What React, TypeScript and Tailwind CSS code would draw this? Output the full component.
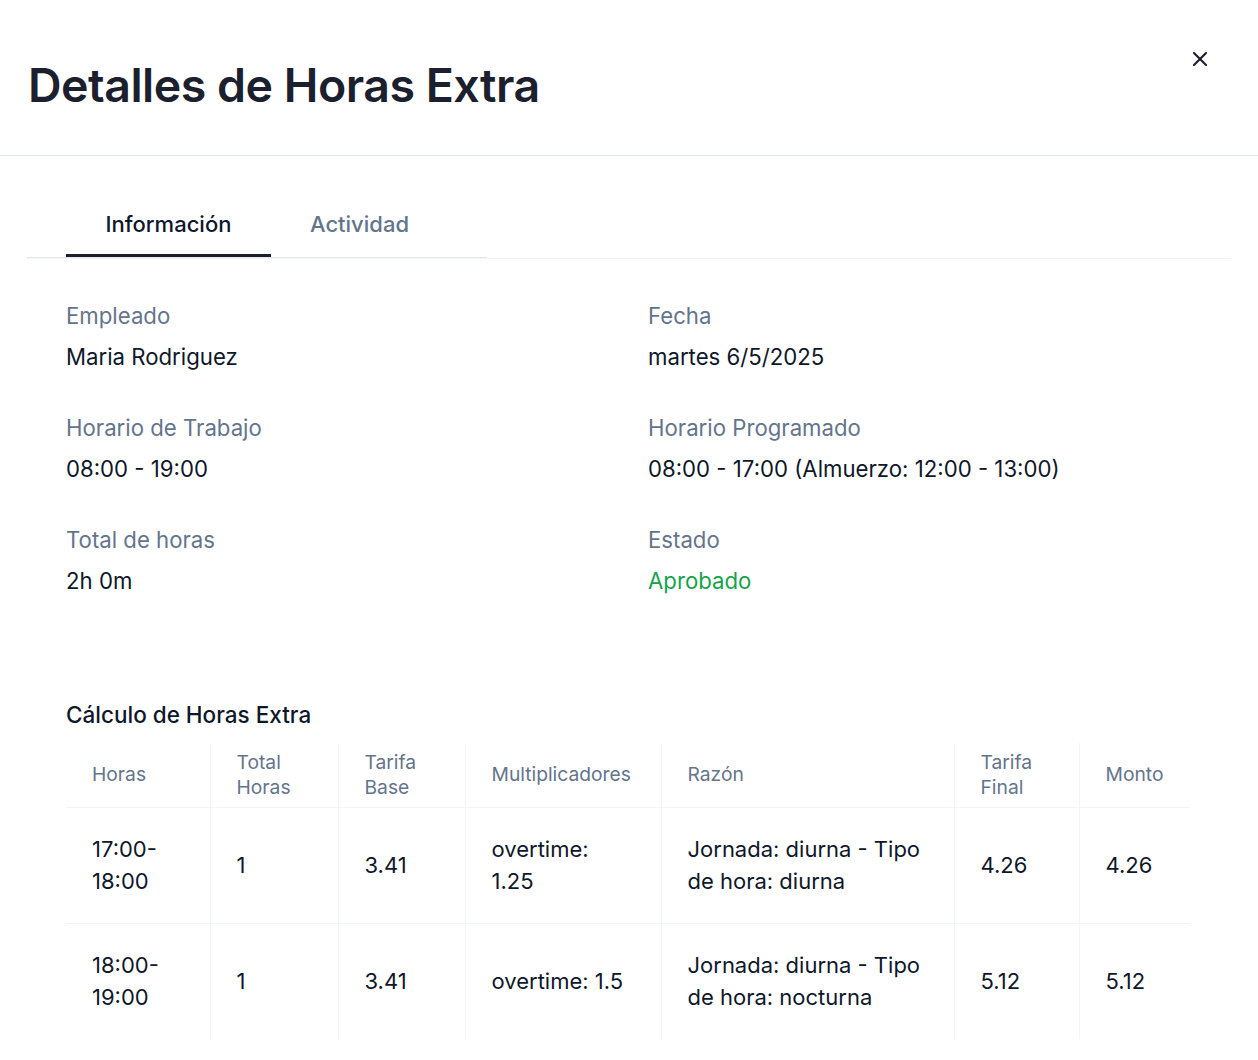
import { X } from 'lucide-react';

const fields = [
  { label: 'Empleado', value: 'Maria Rodriguez' },
  { label: 'Fecha', value: 'martes 6/5/2025' },
  { label: 'Horario de Trabajo', value: '08:00 - 19:00' },
  { label: 'Horario Programado', value: '08:00 - 17:00 (Almuerzo: 12:00 - 13:00)' },
  { label: 'Total de horas', value: '2h 0m' },
  { label: 'Estado', value: 'Aprobado', status: true },
];

const columns = [
  { title: 'Horas', width: 'w-[144px]' },
  { title: 'Total Horas', width: 'w-[128px]' },
  { title: 'Tarifa Base', width: 'w-[127px]' },
  { title: 'Multiplicadores', width: 'w-[196px]' },
  { title: 'Razón', width: 'w-[293px]' },
  { title: 'Tarifa Final', width: 'w-[125px]' },
  { title: 'Monto', width: 'w-[111px]' },
];

const rows = [
  ['17:00-18:00', '1', '3.41', 'overtime: 1.25', 'Jornada: diurna - Tipo de hora: diurna', '4.26', '4.26'],
  ['18:00-19:00', '1', '3.41', 'overtime: 1.5', 'Jornada: diurna - Tipo de hora: nocturna', '5.12', '5.12'],
];

function App() {
  return (
    <div className="min-h-screen w-full bg-white font-['Inter',sans-serif] text-[#0f172a]">
      <div className="flex h-[156px] items-start justify-between border-b border-[#e2e8f0] pl-[28px] pr-[46px]">
        <h1 className="mt-[57px] text-[46.5px] leading-[56px] font-semibold tracking-[-0.5px] text-[#1c1f2e]">
          Detalles de Horas Extra
        </h1>
        <button className="mt-[47px] text-[#1c1f2e]">
          <X size={24} strokeWidth={2.1} />
        </button>
      </div>

      <div className="mx-[27px] mt-[34px] border-b border-[#f1f5f9]">
        <div className="flex w-[460px] border-b border-[#e2e8f0] px-[39px]">
          <div className="flex h-[67px] w-[205px] items-center justify-center border-b-[3px] border-[#1c1f2e] pt-[5px] text-[22px] font-medium text-[#0f172a]">
            Información
          </div>
          <div className="flex h-[67px] w-[177px] items-center justify-center pt-[2px] text-[22px] font-medium text-[#64748b]">
            Actividad
          </div>
        </div>
      </div>

      <div className="mx-[66px] w-[1124px]">
        <div className="mt-[40px] grid grid-cols-2 gap-x-10 gap-y-[38px]">
          {fields.map((f) => (
            <div key={f.label} className="flex flex-col gap-[8px] text-[22.2px] leading-[33px]">
              <span className="text-[#64748b]">{f.label}</span>
              <span className={f.status ? 'text-[#16a34a]' : 'text-[#0f172a]'}>{f.value}</span>
            </div>
          ))}
        </div>

        <h2 className="mt-[103px] text-[22.5px] leading-[30px] font-medium text-[#0f172a]">
          Cálculo de Horas Extra
        </h2>

        <table className="mt-[13px] w-full table-fixed border-collapse">
          <colgroup>
            {columns.map((c) => (
              <col key={c.title} className={c.width} />
            ))}
          </colgroup>
          <thead>
            <tr className="border-b border-[#f1f5f9]">
              {columns.map((c, i) => (
                <th
                  key={c.title}
                  className={
                    'h-[64px] px-[26px] text-left align-middle text-[19.25px] leading-[25px] font-normal text-[#64748b] ' +
                    (i > 0 ? 'border-l border-[#f1f5f9]' : '')
                  }
                >
                  {c.title}
                </th>
              ))}
            </tr>
          </thead>
          <tbody>
            {rows.map((r, ri) => (
              <tr key={r[0]} className={ri < rows.length - 1 ? 'border-b border-[#f1f5f9]' : ''}>
                {r.map((cell, i) => (
                  <td
                    key={i}
                    className={
                      'h-[116px] px-[26px] align-middle text-[22px] leading-[32px] text-[#0f172a] ' +
                      (i > 0 ? 'border-l border-[#f1f5f9]' : '')
                    }
                  >
                    {cell}
                  </td>
                ))}
              </tr>
            ))}
          </tbody>
        </table>
      </div>
    </div>
  );
}

export default App;
